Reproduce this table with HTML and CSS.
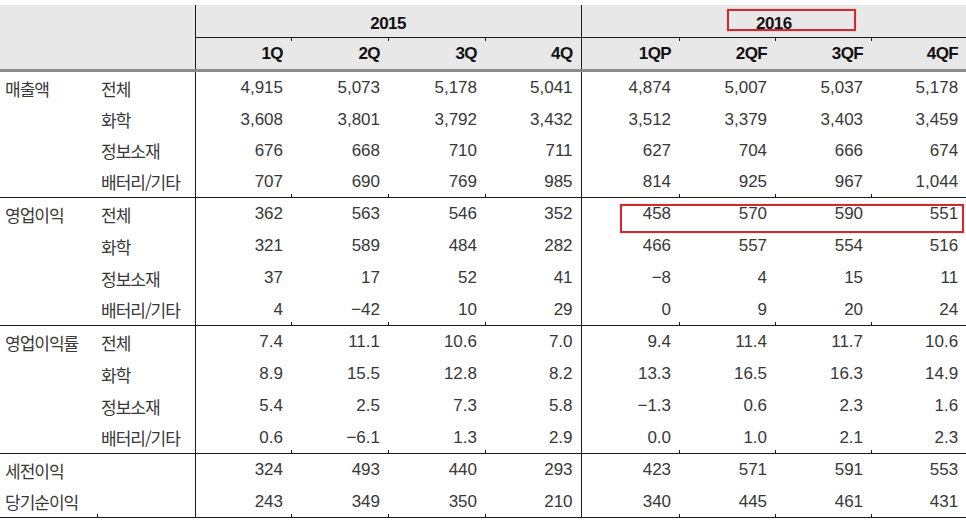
FILE: index.html
```html
<!DOCTYPE html>
<html lang="ko">
<head>
<meta charset="utf-8">
<title>LG화학 실적 추정</title>
<link rel="stylesheet" href="styles.css">
</head>
<body>
<div class="wrap">
<table class="fin">
<colgroup>
<col class="c-a"><col class="c-b">
<col class="c-96"><col class="c-97"><col class="c-97"><col class="c-96">
<col class="c-98"><col class="c-96"><col class="c-96"><col class="c-95">
</colgroup>
<thead>
<tr class="h1">
<th></th><th></th>
<th colspan="4" class="year vl">2015</th>
<th colspan="4" class="year vl">2016</th>
</tr>
<tr class="h2">
<th></th><th></th>
<th class="q vl">1Q</th><th class="q tk">2Q</th><th class="q tk">3Q</th><th class="q tk">4Q</th>
<th class="q vl">1QP</th><th class="q tk">2QF</th><th class="q tk">3QF</th><th class="q tk">4QF</th>
</tr>
</thead>
<tbody class="g1">
<tr class="first"><td class="lab">매출액</td><td class="sub">전체</td><td class="n vl">4,915</td><td class="n">5,073</td><td class="n">5,178</td><td class="n">5,041</td><td class="n vl">4,874</td><td class="n">5,007</td><td class="n">5,037</td><td class="n">5,178</td></tr>
<tr><td class="lab"></td><td class="sub">화학</td><td class="n vl">3,608</td><td class="n">3,801</td><td class="n">3,792</td><td class="n">3,432</td><td class="n vl">3,512</td><td class="n">3,379</td><td class="n">3,403</td><td class="n">3,459</td></tr>
<tr><td class="lab"></td><td class="sub">정보소재</td><td class="n vl">676</td><td class="n">668</td><td class="n">710</td><td class="n">711</td><td class="n vl">627</td><td class="n">704</td><td class="n">666</td><td class="n">674</td></tr>
<tr class="last"><td class="lab"></td><td class="sub">배터리/기타</td><td class="n vl">707</td><td class="n tk">690</td><td class="n tk">769</td><td class="n tk">985</td><td class="n vl">814</td><td class="n tk">925</td><td class="n tk">967</td><td class="n tk">1,044</td></tr>
</tbody>
<tbody class="g">
<tr><td class="lab">영업이익</td><td class="sub">전체</td><td class="n vl">362</td><td class="n">563</td><td class="n">546</td><td class="n">352</td><td class="n vl">458</td><td class="n">570</td><td class="n">590</td><td class="n">551</td></tr>
<tr><td class="lab"></td><td class="sub">화학</td><td class="n vl">321</td><td class="n">589</td><td class="n">484</td><td class="n">282</td><td class="n vl">466</td><td class="n">557</td><td class="n">554</td><td class="n">516</td></tr>
<tr><td class="lab"></td><td class="sub">정보소재</td><td class="n vl">37</td><td class="n">17</td><td class="n">52</td><td class="n">41</td><td class="n vl">&minus;8</td><td class="n">4</td><td class="n">15</td><td class="n">11</td></tr>
<tr class="last"><td class="lab"></td><td class="sub">배터리/기타</td><td class="n vl">4</td><td class="n tk">&minus;42</td><td class="n tk">10</td><td class="n tk">29</td><td class="n vl">0</td><td class="n tk">9</td><td class="n tk">20</td><td class="n tk">24</td></tr>
</tbody>
<tbody class="g">
<tr><td class="lab">영업이익률</td><td class="sub">전체</td><td class="n vl">7.4</td><td class="n">11.1</td><td class="n">10.6</td><td class="n">7.0</td><td class="n vl">9.4</td><td class="n">11.4</td><td class="n">11.7</td><td class="n">10.6</td></tr>
<tr><td class="lab"></td><td class="sub">화학</td><td class="n vl">8.9</td><td class="n">15.5</td><td class="n">12.8</td><td class="n">8.2</td><td class="n vl">13.3</td><td class="n">16.5</td><td class="n">16.3</td><td class="n">14.9</td></tr>
<tr><td class="lab"></td><td class="sub">정보소재</td><td class="n vl">5.4</td><td class="n">2.5</td><td class="n">7.3</td><td class="n">5.8</td><td class="n vl">&minus;1.3</td><td class="n">0.6</td><td class="n">2.3</td><td class="n">1.6</td></tr>
<tr class="last"><td class="lab"></td><td class="sub">배터리/기타</td><td class="n vl">0.6</td><td class="n tk">&minus;6.1</td><td class="n tk">1.3</td><td class="n tk">2.9</td><td class="n vl">0.0</td><td class="n tk">1.0</td><td class="n tk">2.1</td><td class="n tk">2.3</td></tr>
</tbody>
<tbody class="g end">
<tr><td class="lab">세전이익</td><td class="sub"></td><td class="n vl">324</td><td class="n">493</td><td class="n">440</td><td class="n">293</td><td class="n vl">423</td><td class="n">571</td><td class="n">591</td><td class="n">553</td></tr>
<tr class="last"><td class="lab">당기순이익</td><td class="sub tk"></td><td class="n vl">243</td><td class="n tk">349</td><td class="n tk">350</td><td class="n tk">210</td><td class="n vl">340</td><td class="n tk">445</td><td class="n tk">461</td><td class="n tk">431</td></tr>
</tbody>
</table>
<div class="mark mark-year"></div>
<div class="mark mark-row"></div>
</div>
</body>
</html>
```
FILE: styles.css
```css
html, body {
  margin: 0;
  padding: 0;
  background: #ffffff;
}

.wrap {
  position: relative;
  width: 966px;
  padding-top: 5px;
}

.fin {
  width: 966px;
  border-collapse: collapse;
  table-layout: fixed;
  font-family: "Liberation Sans", "Noto Sans CJK KR", sans-serif;
}

.c-a { width: 97px; }
.c-b { width: 98px; }
.c-95 { width: 95px; }
.c-96 { width: 96px; }
.c-97 { width: 97px; }
.c-98 { width: 98px; }

.fin th, .fin td {
  padding: 0;
  white-space: nowrap;
  overflow: visible;
}

.fin thead th {
  background: #e8e8e8;
  color: #111;
  font-weight: bold;
  font-size: 17px;
  letter-spacing: -0.6px;
}

.h1 th { height: 32px; }
.h1 .year {
  text-align: center;
  border-bottom: 1px solid #1a1a1a;
  vertical-align: bottom;
  line-height: 26px;
}

.h2 th {
  height: 31px;
  border-bottom: 3px solid #8c8c8c;
}
.h2 .q {
  text-align: right;
  padding-right: 8px;
}

.vl { border-left: 1px solid #1a1a1a; }

.fin td {
  height: 31px;
  font-size: 17px;
  color: #383838;
  vertical-align: middle;
}
.fin tbody.g1 tr.first td { height: 32px; }
.fin tbody.g td { height: 32px; }

.fin tbody.g1 tr.last td,
.fin tbody.g tr.last td {
  border-bottom: 1px solid #1a1a1a;
}
.fin tbody.g tr.last td { height: 31px; }

.lab, .sub {
  font-family: "Noto Sans CJK KR", "Liberation Sans", sans-serif;
  font-size: 16px;
  letter-spacing: -1px;
  padding-left: 5px !important;
  color: #444;
}
.sub { padding-left: 4px !important; }

.n {
  text-align: right;
  padding-right: 8px !important;
}

/* small tick marks at column joints */
.h2 .tk {
  background-image: linear-gradient(#1a1a1a, #1a1a1a);
  background-size: 1px 3px;
  background-position: left top;
  background-repeat: no-repeat;
}
tr.last .tk {
  background-image: linear-gradient(#1a1a1a, #1a1a1a);
  background-size: 1px 3px;
  background-position: left bottom;
  background-repeat: no-repeat;
}

.mark {
  position: absolute;
  border: 2px solid #cf2b2f;
  box-shadow: 0 0 1px rgba(207, 43, 47, 0.5);
}
.mark-year {
  left: 727px;
  top: 9px;
  width: 125px;
  height: 18px;
}
.mark-row {
  left: 620px;
  top: 204px;
  width: 340px;
  height: 25px;
}
```
